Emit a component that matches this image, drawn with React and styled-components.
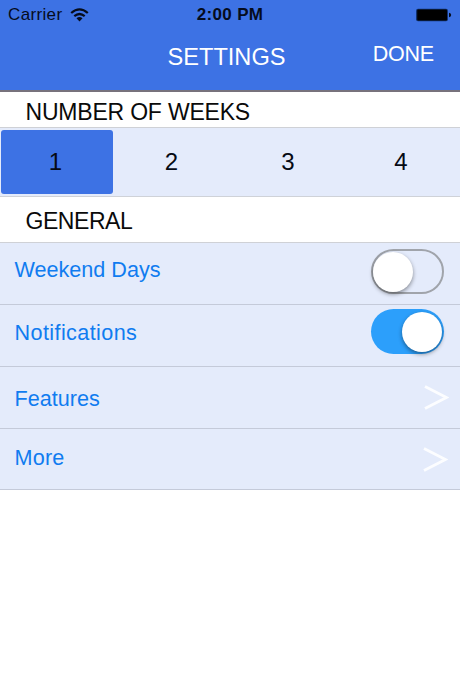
import React, { useState } from 'react';
import styled, { createGlobalStyle } from 'styled-components';

const GlobalStyle = createGlobalStyle`
  * {
    box-sizing: border-box;
  }

  body {
    margin: 0;
    background: #ffffff;
    font-family: "Liberation Sans", Arial, Helvetica, sans-serif;
  }
`;

const Screen = styled.div`
  display: flex;
  flex-direction: column;
  width: 100%;
  height: 690px;
  overflow: hidden;
  background: #ffffff;
`;

const Header = styled.header`
  height: 92px;
  background: #3d72e4;
  border-bottom: 2px solid #77727c;
`;

const StatusBar = styled.div`
  display: grid;
  grid-template-columns: 1fr auto 1fr;
  align-items: center;
  height: 30px;
  padding: 0 8px;
  color: #050c1c;
  font-size: 17px;
  line-height: 30px;
`;

const Carrier = styled.div`
  display: flex;
  align-items: center;
  gap: 8px;
  letter-spacing: 0.35px;
`;

const Clock = styled.div`
  font-weight: bold;
  letter-spacing: 0.35px;
`;

const BatteryIcon = styled.svg`
  justify-self: end;
`;

const TitleBar = styled.div`
  display: grid;
  grid-template-columns: 1fr auto 1fr;
  align-items: start;
  color: #ffffff;
`;

const Title = styled.h1`
  grid-column: 2;
  margin: 0;
  padding: 13px 7px 0 0;
  font-size: 23.6px;
  font-weight: normal;
  line-height: 28px;
`;

const DoneButton = styled.button`
  justify-self: end;
  margin: 10px 26px 0 0;
  padding: 0;
  border: 0;
  background: none;
  color: #ffffff;
  font-family: inherit;
  font-size: 21.5px;
  letter-spacing: -0.2px;
  line-height: 28px;
  cursor: pointer;
`;

const SectionTitle = styled.h2`
  height: ${(props) => props.$height}px;
  margin: 0;
  padding-left: 25.5px;
  background: #ffffff;
  border-bottom: 1px solid #cfd1d6;
  color: #0a0a0a;
  font-size: 23px;
  font-weight: normal;
  letter-spacing: ${(props) => props.$spacing || 0}px;
  line-height: ${(props) => props.$line}px;
`;

const Weeks = styled.div`
  display: grid;
  grid-template-columns: 112px 120px 113px 1fr;
  height: 69px;
  padding: 2px 1px;
  background: #e4ebfb;
  border-bottom: 1px solid #cfd2d8;
`;

const Week = styled.button`
  height: 64px;
  padding: 0 3px 1px 0;
  border: 0;
  border-radius: 3px;
  background: ${(props) => (props.$active ? '#3d72e4' : 'transparent')};
  color: #060a14;
  font-family: inherit;
  font-size: 24px;
  line-height: 62px;
  cursor: pointer;
`;

const Row = styled.div`
  display: flex;
  justify-content: space-between;
  height: 62px;
  padding: 0 16px 0 14.5px;
  background: #e4ebfb;
  border-bottom: 1px solid #c4cad9;

  &:last-child {
    height: 61px;
  }
`;

const Label = styled.span`
  padding-top: ${(props) => props.$top}px;
  color: #107cf0;
  font-size: 21.6px;
  letter-spacing: ${(props) => props.$spacing || 0}px;
  line-height: 26px;
`;

const Switch = styled.button`
  display: flex;
  justify-content: ${(props) => (props.$on ? 'flex-end' : 'flex-start')};
  align-items: center;
  width: 73px;
  height: 45px;
  margin-top: ${(props) => (props.$on ? 4 : 6)}px;
  padding: 0 ${(props) => (props.$on ? 2 : 0)}px;
  border: ${(props) => (props.$on ? '0' : '2px solid #a0a4ab')};
  border-radius: 23px;
  background: ${(props) => (props.$on ? '#2c9ffb' : 'transparent')};
  cursor: pointer;
`;

const Knob = styled.span`
  width: 40px;
  height: 40px;
  border-radius: 50%;
  background: #ffffff;
  box-shadow: 0 2px 4px rgba(0, 0, 0, 0.42);
`;

const Arrow = styled.svg`
  margin: ${(props) => props.$top}px ${(props) => props.$right}px 0 0;
`;

const WifiIcon = () => (
  <svg width="19" height="14" viewBox="0 0 19 14" fill="none">
    <path d="M1.2 5Q9.5 -2.2 17.8 5" stroke="#050c1c" strokeWidth="2.3" />
    <path d="M4.3 8.2Q9.5 3.8 14.7 8.2" stroke="#050c1c" strokeWidth="2.2" />
    <path d="M6.5 10.3Q9.5 7.8 12.5 10.3L9.5 13.4Z" fill="#050c1c" />
  </svg>
);

const Battery = () => (
  <BatteryIcon width="37" height="14" viewBox="0 0 37 14">
    <rect x="1" y="0.7" width="32" height="12.6" rx="2" fill="#12326f" />
    <rect x="2.2" y="1.6" width="29.8" height="10.8" rx="1" fill="#000000" />
    <path d="M34 4.7Q36.2 5.1 36.2 7Q36.2 8.9 34 9.3Z" fill="#050c1c" />
  </BatteryIcon>
);

const Chevron = ({ top, right }) => (
  <Arrow $top={top} $right={right} width="25" height="25" viewBox="0 0 25 25" fill="none">
    <path d="M1 1.5L22.5 12.5L1 23.5" stroke="#fcfdff" strokeWidth="2.8" />
  </Arrow>
);

const Toggle = ({ on, onChange, label }) => (
  <Switch role="switch" aria-checked={on} aria-label={label} $on={on} onClick={onChange}>
    <Knob />
  </Switch>
);

const App = () => {
  const [weeks, setWeeks] = useState(1);
  const [weekend, setWeekend] = useState(false);
  const [notifications, setNotifications] = useState(true);

  return (
    <Screen>
      <GlobalStyle />
      <Header>
        <StatusBar>
          <Carrier>
            Carrier
            <WifiIcon />
          </Carrier>
          <Clock>2:00 PM</Clock>
          <Battery />
        </StatusBar>
        <TitleBar>
          <Title>SETTINGS</Title>
          <DoneButton>DONE</DoneButton>
        </TitleBar>
      </Header>
      <SectionTitle $height={36} $line={40} $spacing={-0.2}>NUMBER OF WEEKS</SectionTitle>
      <Weeks>
        {[1, 2, 3, 4].map((n) => (
          <Week key={n} $active={n === weeks} onClick={() => setWeeks(n)}>{n}</Week>
        ))}
      </Weeks>
      <SectionTitle $height={46} $line={48} $spacing={-0.45}>GENERAL</SectionTitle>
      <Row>
        <Label $top={14}>Weekend Days</Label>
        <Toggle label="Weekend Days" on={weekend} onChange={() => setWeekend(!weekend)} />
      </Row>
      <Row>
        <Label $top={15} $spacing={0.4}>Notifications</Label>
        <Toggle label="Notifications" on={notifications} onChange={() => setNotifications(!notifications)} />
      </Row>
      <Row>
        <Label $top={19}>Features</Label>
        <Chevron top={18} right={-5} />
      </Row>
      <Row>
        <Label $top={16} $spacing={0.2}>More</Label>
        <Chevron top={18} right={-4} />
      </Row>
    </Screen>
  );
};

export default App;
